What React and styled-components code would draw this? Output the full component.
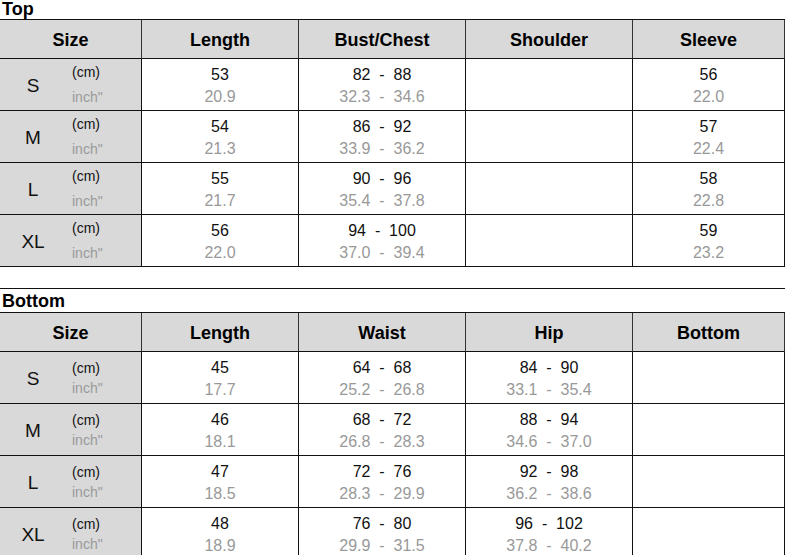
import styled, { createGlobalStyle } from 'styled-components'

const GlobalStyle = createGlobalStyle`
  html, body {
    margin: 0;
    padding: 0;
    background: #fff;
    overflow: hidden;
  }
  body {
    font-family: "Liberation Sans", Arial, sans-serif;
    color: #111;
  }
`

const Page = styled.div`
  width: 785px;
  height: 555px;
  overflow: hidden;
`

const SectionTitle = styled.div`
  height: ${props => props.ruled ? '23px' : '19px'};
  line-height: ${props => props.ruled ? '24px' : '19px'};
  margin-top: ${props => props.ruled ? '21px' : '0'};
  border-top: ${props => props.ruled ? '1px solid #111' : 'none'};
  padding-left: 2px;
  font-size: 18px;
  font-weight: 700;
  color: #000;
  overflow: visible;
`

const Grid = styled.div`
  display: grid;
  grid-template-columns: 142px 157px 167px 167px 152px;
  border-top: 1px solid #111;
`

const HeadCell = styled.div`
  box-sizing: border-box;
  height: 39px;
  background: #d9d9d9;
  border-right: 1px solid #333;
  border-bottom: 1px solid #111;
  display: flex;
  align-items: center;
  justify-content: center;
  font-size: 18px;
  font-weight: 700;
  color: #000;
  padding-top: 2px;
`

const SizeCell = styled.div`
  box-sizing: border-box;
  height: 52px;
  background: #d9d9d9;
  border-right: 1px solid #111;
  border-bottom: 1px solid #111;
  display: grid;
  grid-template-columns: 66px 1fr;
  align-items: center;
`

const SizeLetter = styled.div`
  text-align: center;
  font-size: 19px;
  padding-top: 3px;
`

const Units = styled.div`
  display: flex;
  flex-direction: column;
  gap: ${props => props.tight ? '3px' : '8px'};
  padding-left: 6px;
  padding-top: ${props => props.tight ? '2px' : '0'};
  font-size: 14px;
  line-height: 17px;
`

const Unit = styled.span`
  color: ${props => props.muted ? '#9a9a9a' : '#111'};
`

const ValueCell = styled.div`
  box-sizing: border-box;
  height: 52px;
  border-right: 1px solid #111;
  border-bottom: 1px solid #111;
  display: flex;
  flex-direction: column;
  align-items: center;
  padding-top: 5px;
  font-size: 16px;
  line-height: 22px;
`

const Cm = styled.span`
  color: #111;
  white-space: pre;
`

const Inch = styled.span`
  color: #999;
  white-space: pre;
`

const range = (a, b) => `${a}  -  ${b}`

const topRows = [
  { size: 'S', cells: [['53', '20.9'], [range(82, 88), range('32.3', '34.6')], null, ['56', '22.0']] },
  { size: 'M', cells: [['54', '21.3'], [range(86, 92), range('33.9', '36.2')], null, ['57', '22.4']] },
  { size: 'L', cells: [['55', '21.7'], [range(90, 96), range('35.4', '37.8')], null, ['58', '22.8']] },
  { size: 'XL', cells: [['56', '22.0'], [range(94, 100), range('37.0', '39.4')], null, ['59', '23.2']] },
]

const bottomRows = [
  { size: 'S', cells: [['45', '17.7'], [range(64, 68), range('25.2', '26.8')], [range(84, 90), range('33.1', '35.4')], null] },
  { size: 'M', cells: [['46', '18.1'], [range(68, 72), range('26.8', '28.3')], [range(88, 94), range('34.6', '37.0')], null] },
  { size: 'L', cells: [['47', '18.5'], [range(72, 76), range('28.3', '29.9')], [range(92, 98), range('36.2', '38.6')], null] },
  { size: 'XL', cells: [['48', '18.9'], [range(76, 80), range('29.9', '31.5')], [range(96, 102), range('37.8', '40.2')], null] },
]

const SizeTable = ({ headers, rows, tight }) => (
  <Grid>
    {headers.map(h => <HeadCell key={h}>{h}</HeadCell>)}
    {rows.map(row => [
      <SizeCell key={row.size + '-size'}>
        <SizeLetter>{row.size}</SizeLetter>
        <Units tight={tight}>
          <Unit>(cm)</Unit>
          <Unit muted>inch"</Unit>
        </Units>
      </SizeCell>,
      ...row.cells.map((c, i) => (
        <ValueCell key={row.size + i}>
          {c && <Cm>{c[0]}</Cm>}
          {c && <Inch>{c[1]}</Inch>}
        </ValueCell>
      )),
    ])}
  </Grid>
)

export default function App() {
  return (
    <Page>
      <GlobalStyle />
      <SectionTitle>Top</SectionTitle>
      <SizeTable
        headers={['Size', 'Length', 'Bust/Chest', 'Shoulder', 'Sleeve']}
        rows={topRows}
      />
      <SectionTitle ruled>Bottom</SectionTitle>
      <SizeTable
        headers={['Size', 'Length', 'Waist', 'Hip', 'Bottom']}
        rows={bottomRows}
        tight
      />
    </Page>
  )
}
